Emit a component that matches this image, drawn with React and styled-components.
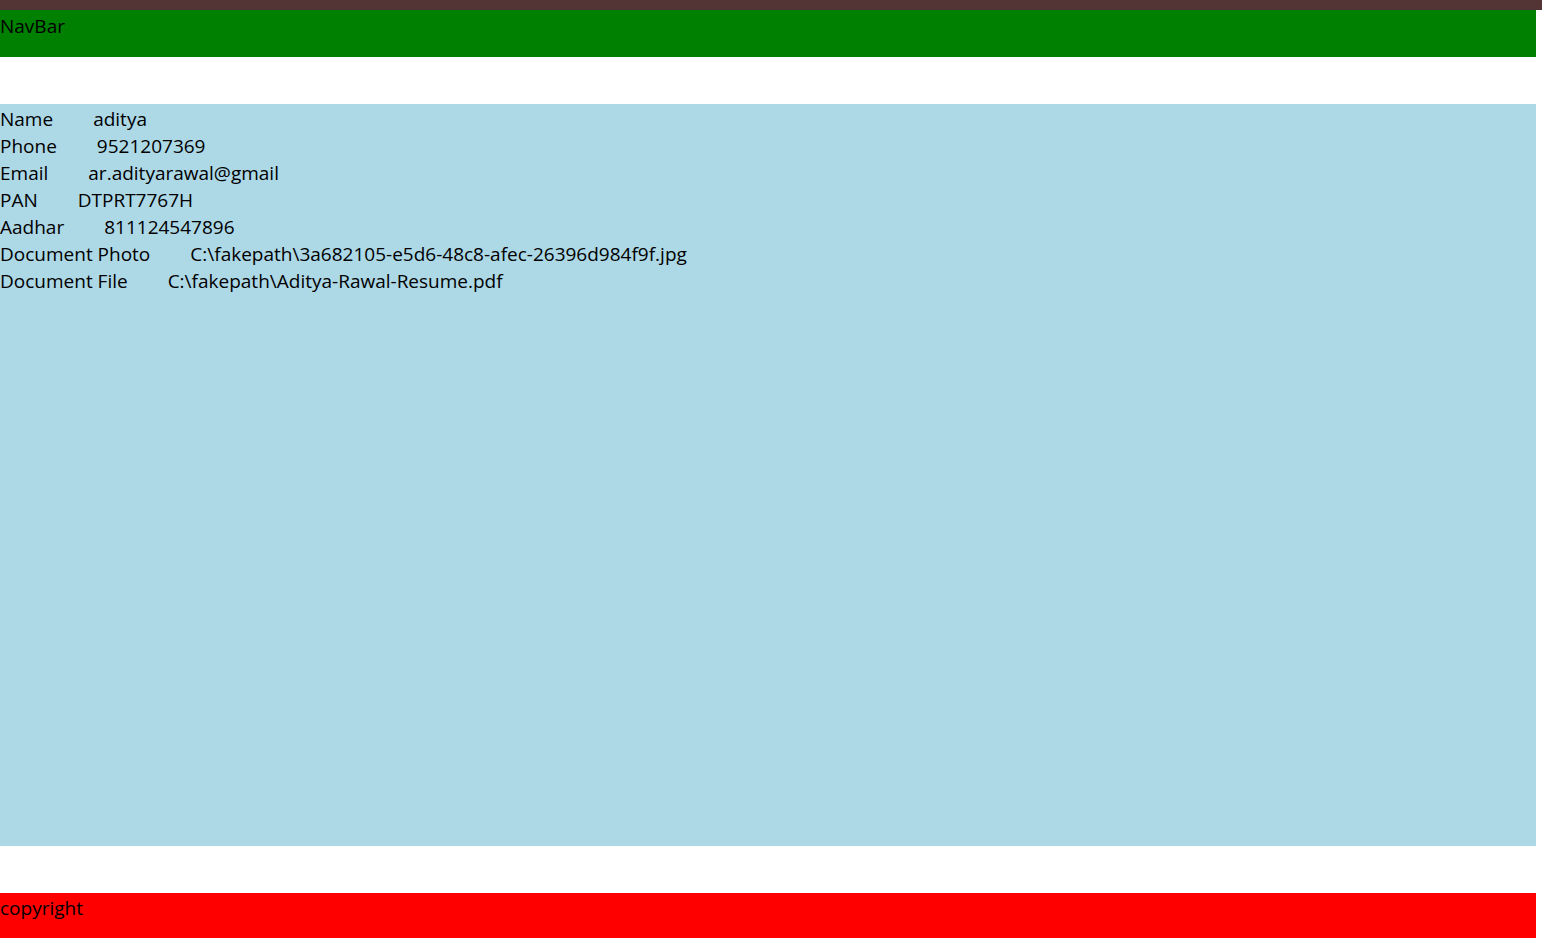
import React from "react";
import styled, { createGlobalStyle } from "styled-components";

const Global = createGlobalStyle`
  html, body { margin: 0; padding: 0; background: #fff; }
  body { font-family: "Open Sans", "Noto Sans", sans-serif; font-size: 19px; color: #000; }
`;

const TopStrip = styled.div`
  height: 10px;
  background: #523534;
`;

const Page = styled.div`
  margin-right: 6px;
  display: flex;
  flex-direction: column;
`;

const Bar = styled.div`
  height: 5vh;
  background: ${(p) => p.$bg};
  line-height: 27px;
  padding-top: ${(p) => p.$pt || 0}px;
  box-sizing: border-box;
`;

const Content = styled.main`
  margin: 5vh 0;
  height: 79.1vh;
  background: #add8e6;
  padding-top: 2px;
  box-sizing: border-box;
`;

const Row = styled.div`
  line-height: 27px;
  white-space: nowrap;
`;

const Value = styled.span`
  margin-left: 40px;
`;

const rows = [
  ["Name", "aditya"],
  ["Phone", "9521207369"],
  ["Email", "ar.adityarawal@gmail"],
  ["PAN", "DTPRT7767H"],
  ["Aadhar", "811124547896"],
  ["Document Photo", "C:\\fakepath\\3a682105-e5d6-48c8-afec-26396d984f9f.jpg"],
  ["Document File", "C:\\fakepath\\Aditya-Rawal-Resume.pdf"],
];

export default function App() {
  return (
    <>
      <Global />
      <TopStrip />
      <Page>
        <Bar $bg="#008000" $pt={3}>NavBar</Bar>
        <Content>
          {rows.map(([k, v]) => (
            <Row key={k}>
              {k}
              <Value>{v}</Value>
            </Row>
          ))}
        </Content>
        <Bar $bg="#ff0000" $pt={2}>copyright</Bar>
      </Page>
    </>
  );
}
